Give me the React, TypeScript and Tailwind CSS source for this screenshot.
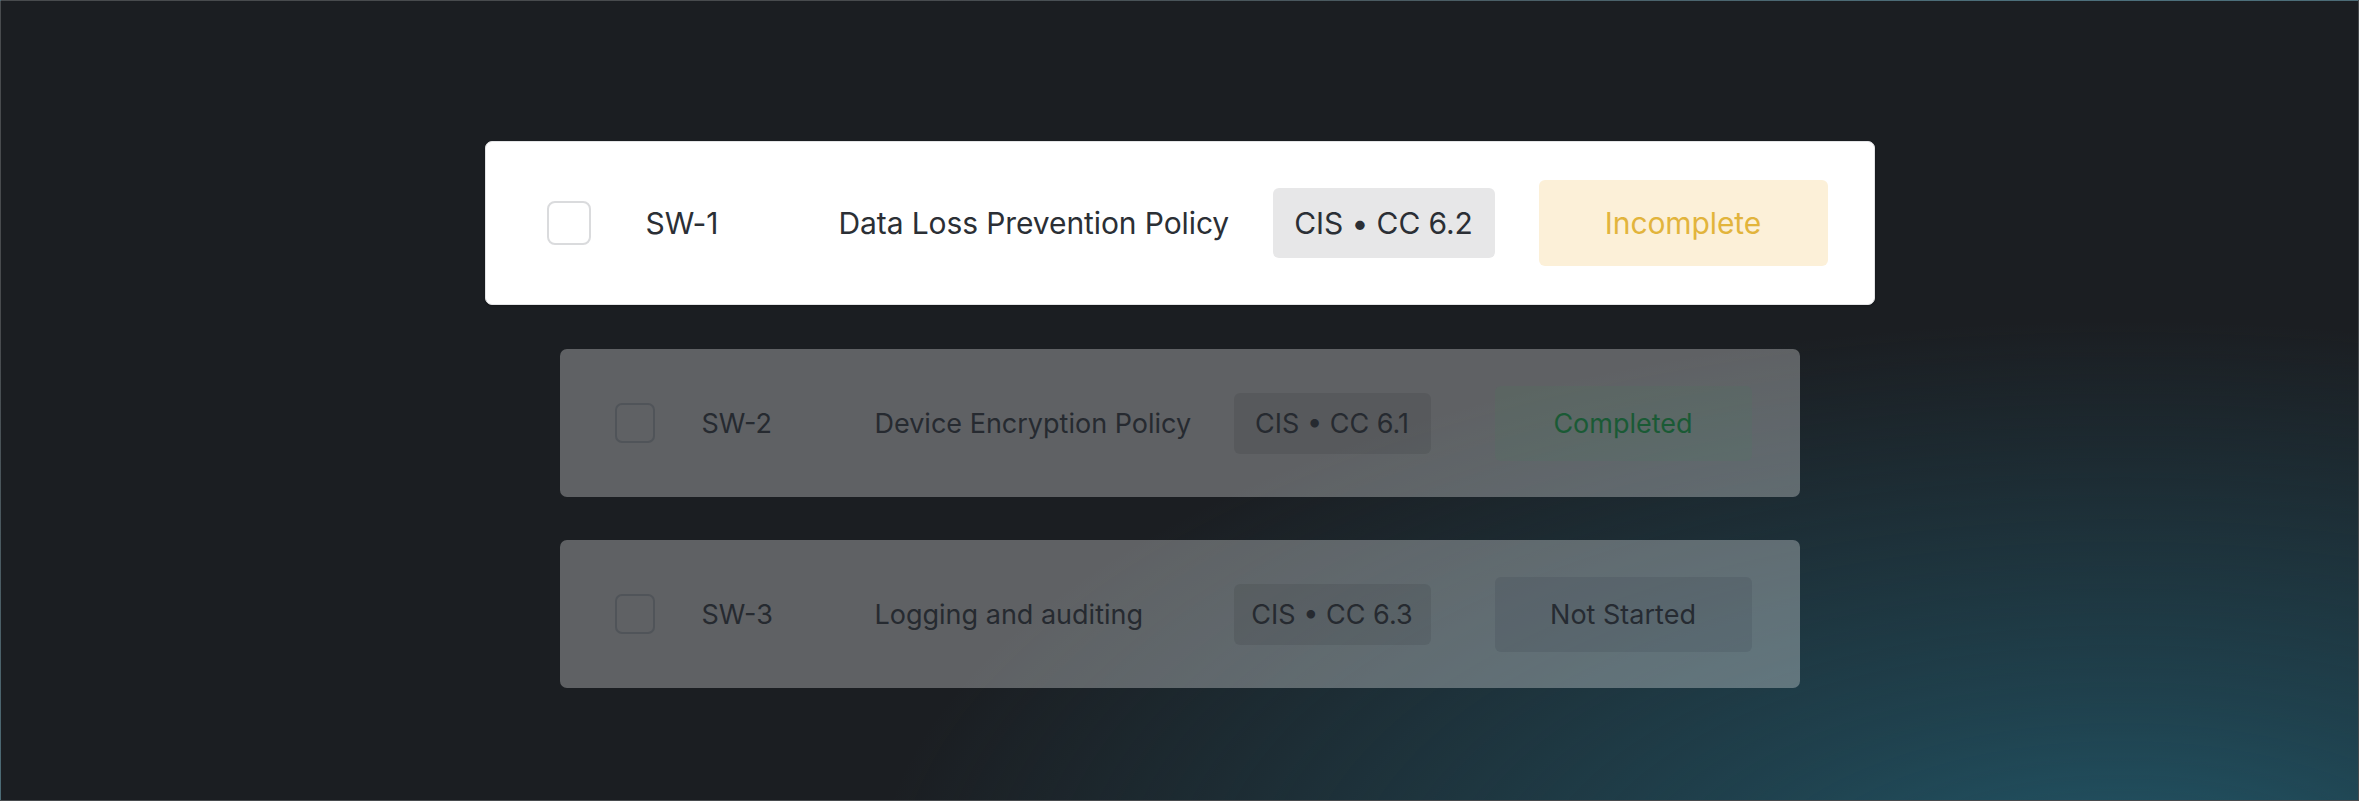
import React from "react";

type Row = {
  id: string;
  title: string;
  tag: string;
  status: "Incomplete" | "Completed" | "Not Started";
};

const rows: Row[] = [
  { id: "SW-1", title: "Data Loss Prevention Policy", tag: "CIS • CC 6.2", status: "Incomplete" },
  { id: "SW-2", title: "Device Encryption Policy", tag: "CIS • CC 6.1", status: "Completed" },
  { id: "SW-3", title: "Logging and auditing", tag: "CIS • CC 6.3", status: "Not Started" },
];

function ActiveCard({ row }: { row: Row }) {
  return (
    <div className="flex h-[164px] w-[1390px] items-center rounded-[7px] border border-[#e3e4e6] bg-white pl-[61px] pr-[46px] text-[30px] tracking-[-0.1px] text-[#2b2f35] shadow-[0_1px_2px_rgba(0,0,0,0.25)]">
      <div className="h-[44px] w-[44px] shrink-0 rounded-[8px] border-2 border-[#dadbdd] bg-white" />
      <div className="ml-[55px] w-[193px] shrink-0 leading-none">{row.id}</div>
      <div className="min-w-0 flex-1 leading-none whitespace-nowrap">{row.title}</div>
      <div className="flex h-[70px] w-[222px] shrink-0 items-center justify-center rounded-[6px] bg-[#e7e7e8] leading-none">
        {row.tag}
      </div>
      <div className="ml-[44px] flex h-[86px] w-[289px] shrink-0 items-center justify-center rounded-[6px] bg-[#fcf0d8] leading-none text-[#e2b43c]">
        {row.status}
      </div>
    </div>
  );
}

function DimCard({ row }: { row: Row }) {
  const statusClass =
    row.status === "Completed"
      ? "bg-[#3f8a5c]/10 text-[#1a5a35]"
      : "bg-[#1e293b]/12 text-[#262b32]";
  return (
    <div className="flex h-[148px] w-[1240px] items-center rounded-[7px] bg-white/30 pl-[55px] pr-[48px] text-[27px] text-[#262a30]">
      <div className="h-[40px] w-[40px] shrink-0 rounded-[7px] border-2 border-[#505459]" />
      <div className="ml-[47px] w-[173px] shrink-0 leading-none">{row.id}</div>
      <div className="min-w-0 flex-1 leading-none whitespace-nowrap">{row.title}</div>
      <div className="flex h-[61px] w-[197px] shrink-0 items-center justify-center rounded-[6px] bg-black/[0.08] leading-none">
        {row.tag}
      </div>
      <div
        className={`ml-[64px] flex h-[75px] w-[257px] shrink-0 items-center justify-center rounded-[6px] leading-none ${statusClass}`}
      >
        {row.status}
      </div>
    </div>
  );
}

export default function App() {
  return (
    <div
      className="flex h-[801px] w-[2359px] flex-col items-center overflow-hidden border border-white/20 bg-[#1b1e22] bg-[radial-gradient(ellipse_1250px_580px_at_2120px_900px,#22586a_0%,rgba(34,88,106,0.6)_35%,rgba(27,30,34,0)_100%)] pt-[140px]"
      style={{ fontFamily: "Inter, 'Noto Sans', sans-serif" }}
    >
      <ActiveCard row={rows[0]} />
      <div className="mt-[44px] flex flex-col gap-[43px]">
        <DimCard row={rows[1]} />
        <DimCard row={rows[2]} />
      </div>
    </div>
  );
}
